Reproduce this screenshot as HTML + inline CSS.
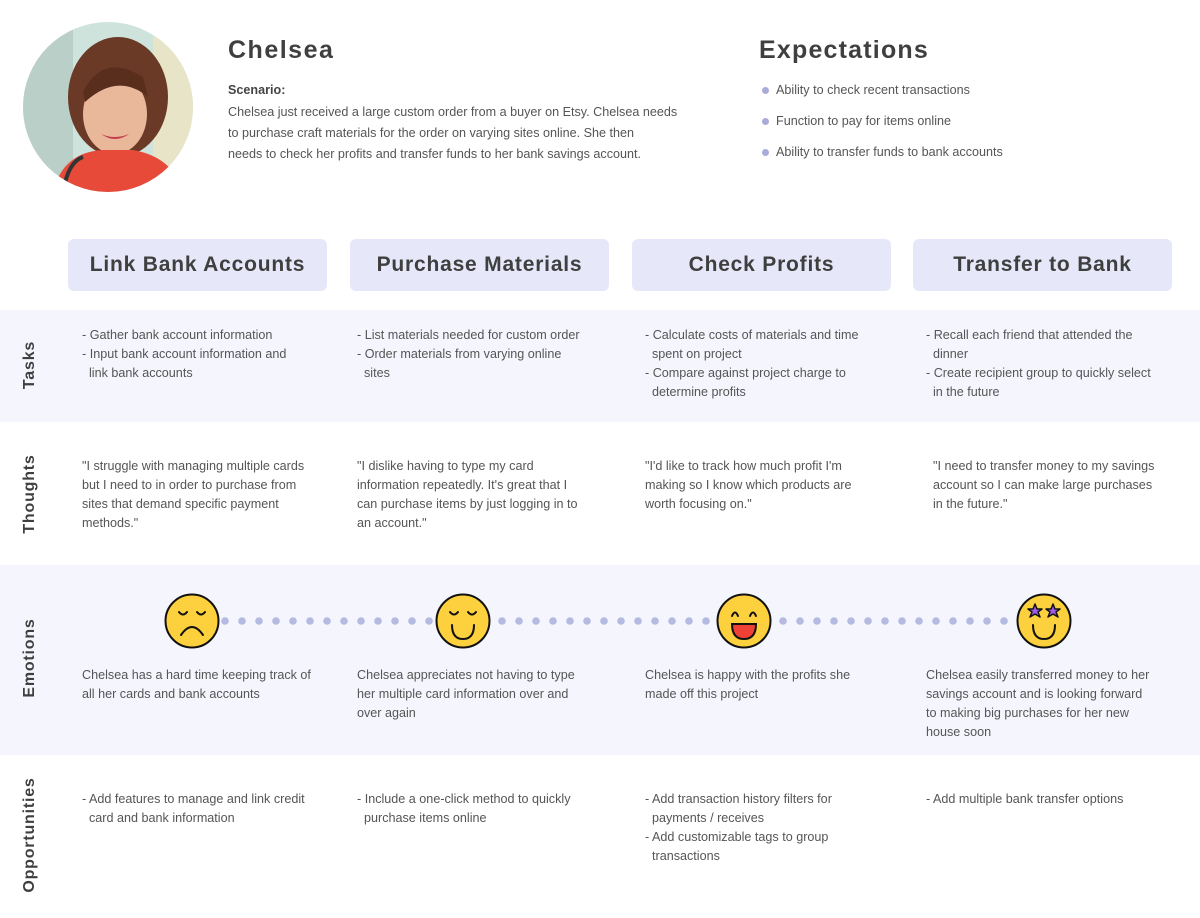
<!DOCTYPE html>
<html><head><meta charset="utf-8"><style>
*{margin:0;padding:0;box-sizing:border-box}
body{width:1200px;height:918px;position:relative;background:#fff;font-family:"Liberation Sans",sans-serif;color:#555;overflow:hidden}
.a{position:absolute}
.band{position:absolute;left:0;width:1200px;background:#f5f6fd}
.hdr{position:absolute;top:239px;width:259px;height:52px;background:#e6e7f8;border-radius:6px;font-size:21px;font-weight:bold;color:#3f3f3f;text-align:center;line-height:52px;letter-spacing:.8px}
.t{position:absolute;font-size:12.6px;line-height:19px;color:#555;white-space:nowrap}
.t .c{padding-left:7px}
.lbl{position:absolute;font-size:16px;font-weight:bold;color:#3f3f3f;transform:rotate(-90deg);transform-origin:center;white-space:nowrap;letter-spacing:.8px;text-align:center;width:160px;left:-50px}
.exp{position:absolute;left:762px;font-size:12.6px;color:#555}
.exp:before{content:"";position:absolute;left:0;top:4px;width:7px;height:7px;border-radius:50%;background:#a9acd9}
.exp span{padding-left:14px}
</style></head><body>
<svg class="a" style="left:23px;top:22px" width="170" height="170" viewBox="0 0 170 170">
<defs><clipPath id="c"><circle cx="85" cy="85" r="85"/></clipPath></defs>
<g clip-path="url(#c)">
<rect width="170" height="170" fill="#cfe3dd"/>
<rect x="0" y="0" width="50" height="170" fill="#b9cfc8"/>
<rect x="130" y="0" width="40" height="170" fill="#e8e4c8"/>
<ellipse cx="95" cy="75" rx="50" ry="60" fill="#6a3a26"/>
<ellipse cx="92" cy="92" rx="32" ry="40" fill="#e9b79a"/>
<path d="M60 70 Q80 30 120 55 L125 75 Q95 50 62 80Z" fill="#5a2e1d"/>
<path d="M78 112 Q92 122 106 112 Q92 118 78 112Z" fill="#c2404e"/>
<path d="M30 170 Q40 130 80 128 L110 128 Q150 135 160 170Z" fill="#e84a3a"/>
<path d="M40 170 Q45 140 60 135" stroke="#333" stroke-width="4" fill="none"/>
</g></svg>
<div class="a" style="left:228px;top:36px;font-size:25px;font-weight:bold;color:#3f3f3f;letter-spacing:1.5px">Chelsea</div>
<div class="a" style="left:228px;top:83px;font-size:12.6px;font-weight:bold;color:#444">Scenario:</div>
<div class="a" style="left:228px;top:102px;font-size:12.6px;line-height:21px;white-space:nowrap">Chelsea just received a large custom order from a buyer on Etsy. Chelsea needs<br>to purchase craft materials for the order on varying sites online. She then<br>needs to check her profits and transfer funds to her bank savings account.</div>
<div class="a" style="left:759px;top:36px;font-size:25px;font-weight:bold;color:#3f3f3f;letter-spacing:1.2px">Expectations</div>
<div class="exp" style="top:83px"><span>Ability to check recent transactions</span></div>
<div class="exp" style="top:114px"><span>Function to pay for items online</span></div>
<div class="exp" style="top:145px"><span>Ability to transfer funds to bank accounts</span></div>

<div class="hdr" style="left:68px">Link Bank Accounts</div>
<div class="hdr" style="left:350px">Purchase Materials</div>
<div class="hdr" style="left:632px">Check Profits</div>
<div class="hdr" style="left:913px">Transfer to Bank</div>

<div class="band" style="top:310px;height:112px"></div>
<div class="band" style="top:565px;height:190px"></div>

<div class="lbl" style="top:356px">Tasks</div>
<div class="lbl" style="top:485px">Thoughts</div>
<div class="lbl" style="top:649px">Emotions</div>
<div class="lbl" style="top:826px">Opportunities</div>

<div class="t" style="left:82px;top:326px">- Gather bank account information<br>- Input bank account information and<br><span class="c">link bank accounts</span></div>
<div class="t" style="left:357px;top:326px">- List materials needed for custom order<br>- Order materials from varying online<br><span class="c">sites</span></div>
<div class="t" style="left:645px;top:326px">- Calculate costs of materials and time<br><span class="c">spent on project</span><br>- Compare against project charge to<br><span class="c">determine profits</span></div>
<div class="t" style="left:926px;top:326px">- Recall each friend that attended the<br><span class="c">dinner</span><br>- Create recipient group to quickly select<br><span class="c">in the future</span></div>

<div class="t" style="left:82px;top:457px">"I struggle with managing multiple cards<br>but I need to in order to purchase from<br>sites that demand specific payment<br>methods."</div>
<div class="t" style="left:357px;top:457px">"I dislike having to type my card<br>information repeatedly. It's great that I<br>can purchase items by just logging in to<br>an account."</div>
<div class="t" style="left:645px;top:457px">"I'd like to track how much profit I'm<br>making so I know which products are<br>worth focusing on."</div>
<div class="t" style="left:933px;top:457px">"I need to transfer money to my savings<br>account so I can make large purchases<br>in the future."</div>

<svg class="a" style="left:0;top:590px" width="1200" height="62">
<g fill="#b5bae0">
<circle cx="225" cy="31" r="3.8"/><circle cx="242" cy="31" r="3.8"/><circle cx="259" cy="31" r="3.8"/><circle cx="276" cy="31" r="3.8"/><circle cx="293" cy="31" r="3.8"/><circle cx="310" cy="31" r="3.8"/><circle cx="327" cy="31" r="3.8"/><circle cx="344" cy="31" r="3.8"/><circle cx="361" cy="31" r="3.8"/><circle cx="378" cy="31" r="3.8"/><circle cx="395" cy="31" r="3.8"/><circle cx="412" cy="31" r="3.8"/><circle cx="429" cy="31" r="3.8"/>
<circle cx="502" cy="31" r="3.8"/><circle cx="519" cy="31" r="3.8"/><circle cx="536" cy="31" r="3.8"/><circle cx="553" cy="31" r="3.8"/><circle cx="570" cy="31" r="3.8"/><circle cx="587" cy="31" r="3.8"/><circle cx="604" cy="31" r="3.8"/><circle cx="621" cy="31" r="3.8"/><circle cx="638" cy="31" r="3.8"/><circle cx="655" cy="31" r="3.8"/><circle cx="672" cy="31" r="3.8"/><circle cx="689" cy="31" r="3.8"/><circle cx="706" cy="31" r="3.8"/>
<circle cx="783" cy="31" r="3.8"/><circle cx="800" cy="31" r="3.8"/><circle cx="817" cy="31" r="3.8"/><circle cx="834" cy="31" r="3.8"/><circle cx="851" cy="31" r="3.8"/><circle cx="868" cy="31" r="3.8"/><circle cx="885" cy="31" r="3.8"/><circle cx="902" cy="31" r="3.8"/><circle cx="919" cy="31" r="3.8"/><circle cx="936" cy="31" r="3.8"/><circle cx="953" cy="31" r="3.8"/><circle cx="970" cy="31" r="3.8"/><circle cx="987" cy="31" r="3.8"/><circle cx="1004" cy="31" r="3.8"/>
</g>
<g stroke="#111" stroke-width="2" fill="none" stroke-linecap="round">
<g transform="translate(192,31)"><circle r="26.5" fill="#fdd03e"/><path d="M-13 -9 Q-9 -4 -5 -9 M5 -9 Q9 -4 13 -9 M-11 14 Q0 -2 11 14"/></g>
<g transform="translate(463,31)"><circle r="26.5" fill="#fdd03e"/><path d="M-13 -9 Q-9 -4 -5 -9 M5 -9 Q9 -4 13 -9 M-11 4 Q-11 18 0 18 Q11 18 11 4"/></g>
<g transform="translate(744,31)"><circle r="26.5" fill="#fdd03e"/><path d="M-12 -5 Q-9 -12 -6 -5 M6 -5 Q9 -12 12 -5"/><path d="M-12 3 L12 3 Q12 18 0 18 Q-12 18 -12 3Z" fill="#ef4136"/></g>
<g transform="translate(1044,31)"><circle r="26.5" fill="#fdd03e"/><path d="M-11 4 Q-11 18 0 18 Q11 18 11 4"/>
<path d="M-9 -17 L-7 -12 L-2 -12 L-6 -9 L-4 -4 L-9 -7 L-14 -4 L-12 -9 L-16 -12 L-11 -12Z M9 -17 L11 -12 L16 -12 L12 -9 L14 -4 L9 -7 L4 -4 L6 -9 L2 -12 L7 -12Z" fill="#9c5ce8" stroke-width="1.5" stroke-linejoin="round"/></g>
</g></svg>

<div class="t" style="left:82px;top:666px">Chelsea has a hard time keeping track of<br>all her cards and bank accounts</div>
<div class="t" style="left:357px;top:666px">Chelsea appreciates not having to type<br>her multiple card information over and<br>over again</div>
<div class="t" style="left:645px;top:666px">Chelsea is happy with the profits she<br>made off this project</div>
<div class="t" style="left:926px;top:666px">Chelsea easily transferred money to her<br>savings account and is looking forward<br>to making big purchases for her new<br>house soon</div>

<div class="t" style="left:82px;top:790px">- Add features to manage and link credit<br><span class="c">card and bank information</span></div>
<div class="t" style="left:357px;top:790px">- Include a one-click method to quickly<br><span class="c">purchase items online</span></div>
<div class="t" style="left:645px;top:790px">- Add transaction history filters for<br><span class="c">payments / receives</span><br>- Add customizable tags to group<br><span class="c">transactions</span></div>
<div class="t" style="left:926px;top:790px">- Add multiple bank transfer options</div>
</body></html>
